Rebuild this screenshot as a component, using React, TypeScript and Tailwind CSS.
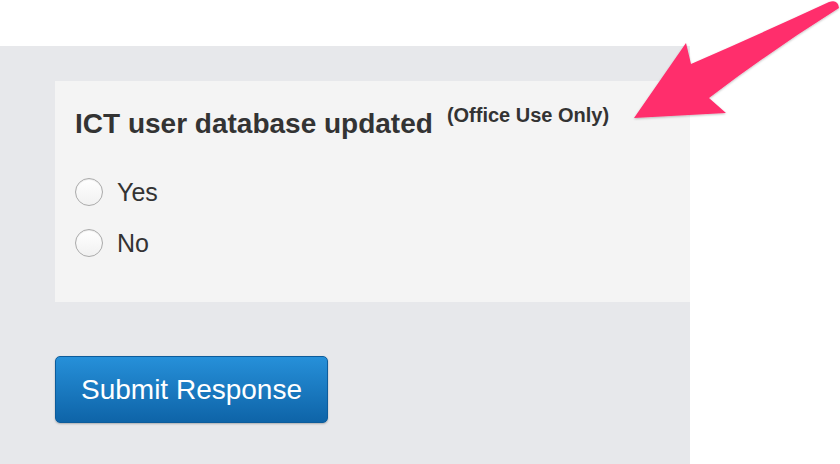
import React from 'react';

export default function App() {
  return (
    <div className="relative w-[840px] h-[464px] bg-white overflow-hidden" style={{ fontFamily: '"Liberation Sans", Arial, sans-serif' }}>
      <div className="h-[46px]" />
      <div className="w-[690px] h-[418px] bg-[#e7e8eb] pt-[35px] pl-[55px]">
        {/* question card */}
        <div className="bg-[#f4f4f4] pt-[27px] pb-[41px] pl-[20px]">
          <div className="h-[32px] leading-[32px] text-[28px] font-bold text-[#333333] whitespace-nowrap">
            ICT user database updated
            <span className="relative -top-[11px] ml-[14px] text-[20px]">(Office Use Only)</span>
          </div>
          <div className="mt-[34px] flex flex-col gap-[15px]">
            {['Yes', 'No'].map((opt) => (
              <label key={opt} className="h-[36px] flex items-center gap-[14px]">
                <span className="w-[28px] h-[28px] rounded-full border border-[#ababab] bg-gradient-to-b from-[#ffffff] to-[#f1f1f1] shadow-[inset_0_1px_1px_rgba(0,0,0,0.08)]" />
                <span className="text-[25px] text-[#333333] leading-none">{opt}</span>
              </label>
            ))}
          </div>
        </div>
        <button className="mt-[54px] w-[273px] h-[67px] rounded-[5px] border border-[#0d5c9b] bg-gradient-to-b from-[#2690d9] to-[#0e64a8] text-white text-[28px] shadow-[0_1px_2px_rgba(0,0,0,0.25)]">
          Submit Response
        </button>
      </div>

      {/* annotation arrow */}
      <svg className="absolute top-0 left-0" width="840" height="464" viewBox="0 0 840 464">
        <defs>
          <filter id="sh" x="-10%" y="-10%" width="120%" height="130%">
            <feDropShadow dx="0" dy="1" stdDeviation="1.2" floodColor="#000" floodOpacity="0.25" />
          </filter>
        </defs>
        <path
          d="M634 118 L686 43 L691 64 Q762 33 829 2 Q838 -1 839 8 Q772 50 709 98 L726 113 Z"
          fill="#ff2d6c"
          filter="url(#sh)"
        />
      </svg>
    </div>
  );
}
